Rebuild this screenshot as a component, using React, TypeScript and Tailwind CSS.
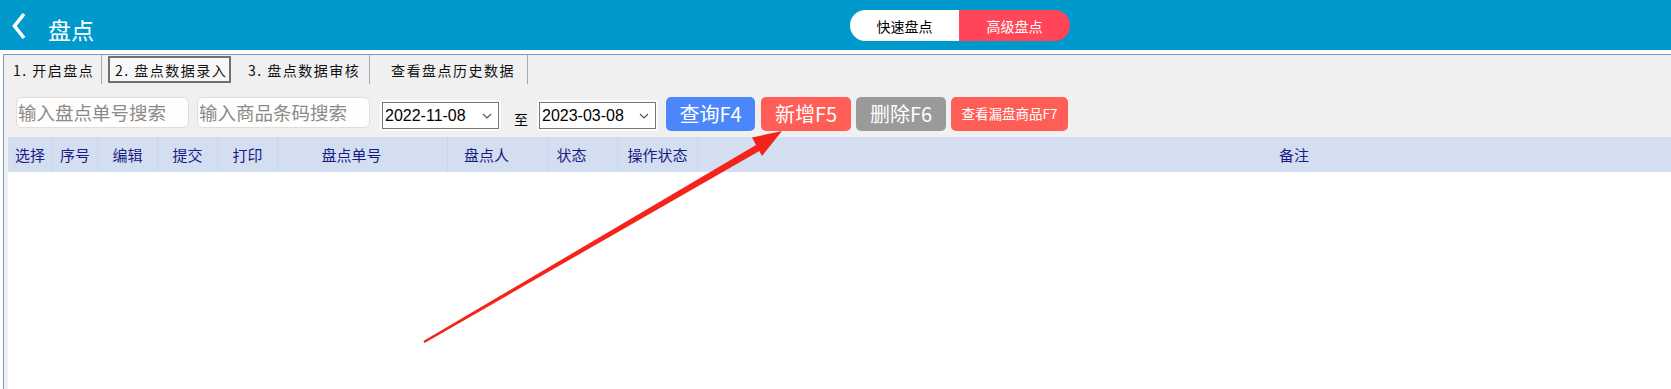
import React from "react";

const CJK = "font-['Noto_Sans_CJK_SC','Noto_Sans',sans-serif]";

function Chevron() {
  return (
    <svg width="10" height="6" viewBox="0 0 10 6" className="shrink-0">
      <polyline points="1,1 5,5 9,1" fill="none" stroke="#555" strokeWidth="1.2" />
    </svg>
  );
}

function DateSelect({ value }: { value: string }) {
  return (
    <div className="mt-[3px] rounded-[3px] p-[2px] bg-[#fbfbfb]">
      <div className="w-[117px] h-[27px] border border-[#767676] bg-white flex items-center justify-between pl-[2px] pr-[6px]">
        <span className="font-['Liberation_Sans',sans-serif] text-[16px] text-black leading-none">{value}</span>
        <Chevron />
      </div>
    </div>
  );
}

export default function App() {
  const cols: { label: string; w: number; pr?: number; last?: boolean }[] = [
    { label: "选择", w: 45 },
    { label: "序号", w: 45 },
    { label: "编辑", w: 60 },
    { label: "提交", w: 60 },
    { label: "打印", w: 60 },
    { label: "盘点单号", w: 170, pr: 22 },
    { label: "盘点人", w: 100, pr: 22 },
    { label: "状态", w: 70, pr: 22 },
    { label: "操作状态", w: 80 },
    { label: "备注", w: 1192, last: true },
  ];

  return (
    <div className={`relative w-[1671px] h-[389px] overflow-hidden bg-white ${CJK}`}>
      {/* Header */}
      <div className="h-[50px] bg-[#0099cc] flex items-center">
        <div className="w-[850px] flex items-center">
          <svg width="16" height="28" viewBox="0 0 16 28" className="ml-[11px] mt-[2px]">
            <polyline points="13,2 3.5,14 13,26" fill="none" stroke="#fff" strokeWidth="3.6" strokeLinejoin="miter" />
          </svg>
          <span className="ml-[21px] mt-[8px] text-[23px] text-white leading-none">盘点</span>
        </div>
        <div className="flex h-[31px] rounded-full overflow-hidden text-[14px] leading-none">
          <div className="w-[109px] bg-white text-black flex items-center justify-center pt-[2px]">快速盘点</div>
          <div className="w-[111px] bg-[#ff4557] text-white flex items-center justify-center pt-[2px]">高级盘点</div>
        </div>
      </div>
      <div className="h-[4px] bg-white" />
      {/* Panel */}
      <div className="ml-[3px] border-t border-l border-[#7f9db9] bg-[#f0f0f0] h-[335px] flex flex-col">
        {/* Tabs */}
        <div className="flex h-[29px] text-[14px] tracking-[1.5px] text-[#111] leading-none">
          <div className="w-[98px] border-r border-[#a8a8a8] flex items-center pl-[9px] pt-[1px]">1. 开启盘点</div>
          <div className="ml-[6px] mt-[1px] w-[123px] h-[27px] border-2 border-[#707070] bg-[#f7f7f7] flex items-center pl-[5px] pt-[1px]">2. 盘点数据录入</div>
          <div className="w-[139px] border-r border-[#a8a8a8] flex items-center pl-[17px] pt-[1px]">3. 盘点数据审核</div>
          <div className="w-[158px] border-r border-[#a8a8a8] flex items-center pl-[21px] pt-[1px]">查看盘点历史数据</div>
        </div>
        {/* Search row */}
        <div className="mt-[13px] flex items-start h-[34px]">
          <div className="ml-[12px] w-[173px] h-[31px] rounded-[6px] border border-[#dedede] bg-[#fffefc] flex items-center pl-[1px] text-[18.5px] text-[#8a8a8a] leading-none">输入盘点单号搜索</div>
          <div className="ml-[8px] w-[173px] h-[31px] rounded-[6px] border border-[#dedede] bg-[#fffefc] flex items-center pl-[1px] text-[18.5px] text-[#8a8a8a] leading-none">输入商品条码搜索</div>
          <div className="ml-[10px]">
            <DateSelect value="2022-11-08" />
          </div>
          <div className="ml-[13px] mt-[15px] text-[14px] leading-none text-black">至</div>
          <div className="ml-[9px]">
            <DateSelect value="2023-03-08" />
          </div>
          <div className="ml-[8px] w-[89px] h-[34px] rounded-[5px] bg-[#4b87fb] text-white text-[20px] leading-none flex items-center justify-center">查询F4</div>
          <div className="ml-[6px] w-[90px] h-[34px] rounded-[5px] bg-[#ff5e57] text-white text-[20px] leading-none flex items-center justify-center">新增F5</div>
          <div className="ml-[5px] w-[90px] h-[34px] rounded-[5px] bg-[#9a9a9a] text-white text-[20px] leading-none flex items-center justify-center">删除F6</div>
          <div className="ml-[5px] w-[117px] h-[34px] rounded-[5px] bg-[#ff5e57] text-white text-[13.5px] leading-none flex items-center justify-center">查看漏盘商品F7</div>
        </div>
        {/* Table */}
        <div className="mt-[6px] ml-[4px] flex-1 bg-white flex flex-col">
          <div className="h-[35px] bg-[#d3dff0] flex">
            {cols.map((c) => (
              <div
                key={c.label}
                className={`shrink-0 flex items-center justify-center text-[15px] text-[#1b1b88] leading-none ${c.last ? "" : "border-r border-[#c9d5e8]"}`}
                style={{ width: c.w, paddingRight: c.pr ?? 0 }}
              >
                {c.label}
              </div>
            ))}
          </div>
        </div>
      </div>
      {/* Annotation arrow */}
      <svg className="absolute left-0 top-0 pointer-events-none" width="1671" height="389" viewBox="0 0 1671 389">
        <polygon
          points="424.6,342.9 423.4,341.1 756.0,145.0 752.0,137.5 782,131 762.0,156.0 759.4,151.0"
          fill="#f5241b"
        />
      </svg>
    </div>
  );
}
